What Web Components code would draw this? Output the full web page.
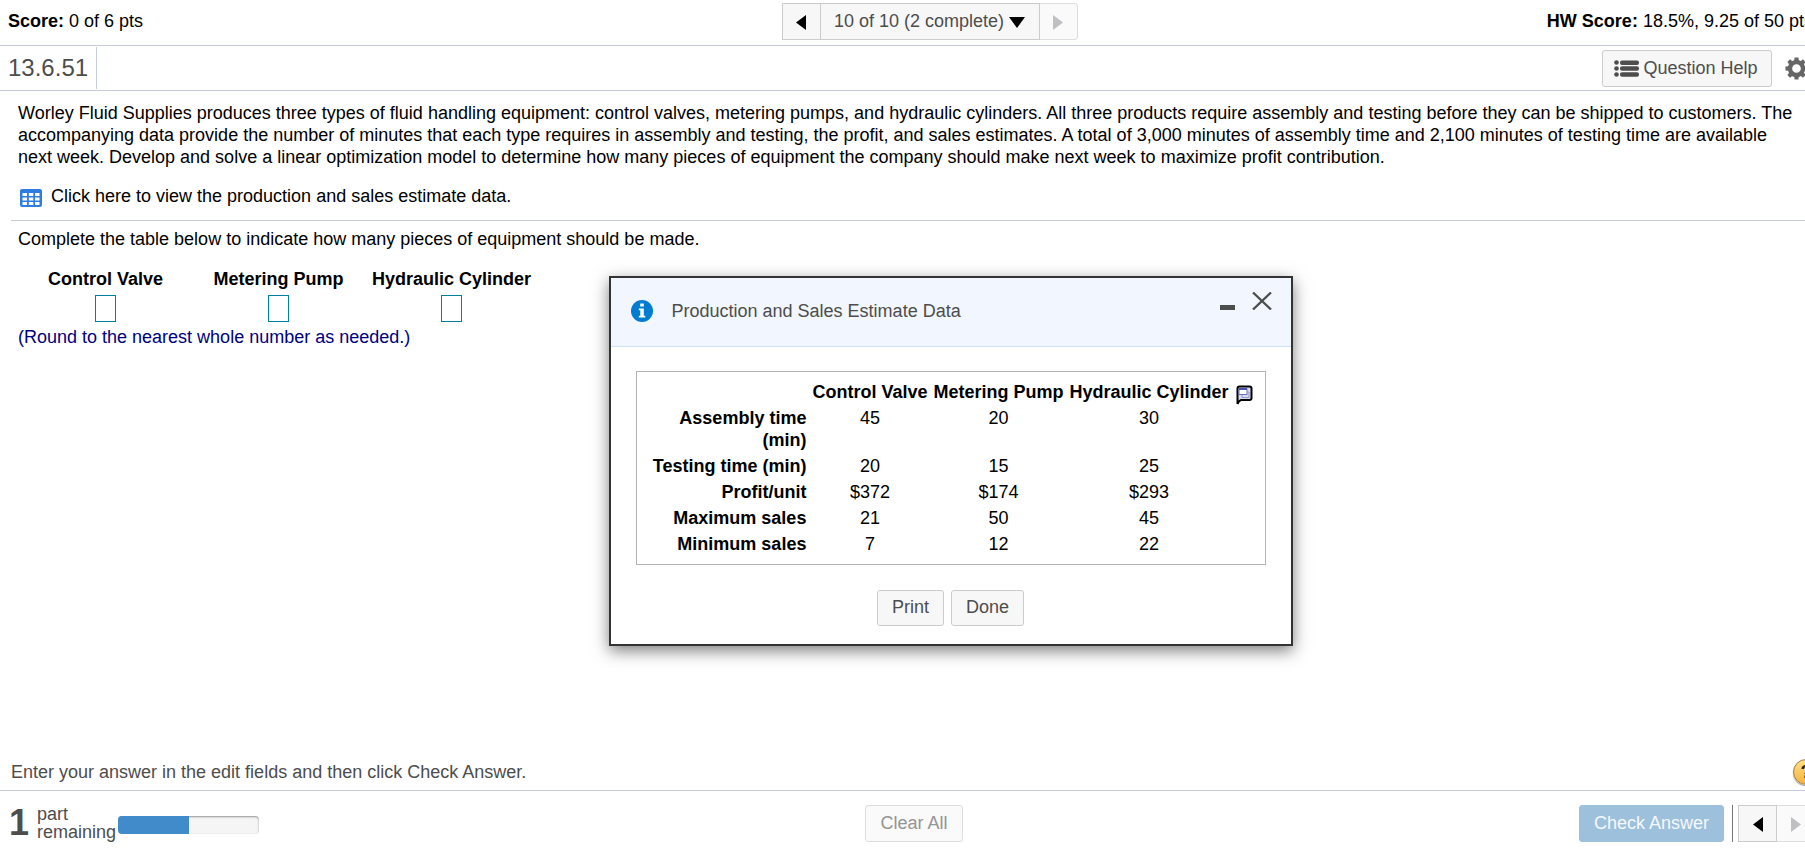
<!DOCTYPE html>
<html lang="en">
<head>
<meta charset="utf-8">
<title>Homework 13.6.51</title>
<style>
html, body { margin: 0; height: 100%; }
body { overflow-x: hidden; background: #fff; color: #000; font: 18px/22px "Liberation Sans", Arial, sans-serif; }
</style>
</head>
<body>
<homework-page></homework-page>
<script>
const define = (name, html) => customElements.define(name, class extends HTMLElement {
  constructor() {
    super();
    this.attachShadow({ mode: "open" }).innerHTML = html;
  }
});

const reset = `*, *::before { box-sizing: border-box; } button { margin: 0; font: inherit; cursor: pointer; }`;
const buttonLook = `button { display: flex; align-items: center; justify-content: center; border: 1px solid #ccc; border-radius: 3px; background: #f7f7f7; color: #4d4d4d; }`;
const left = `<svg width="10" height="15" viewBox="0 0 10 15" aria-hidden="true"><path fill="currentColor" d="M10 0v15L0 7.5z"/></svg>`;
const right = `<svg width="10" height="15" viewBox="0 0 10 15" aria-hidden="true"><path fill="currentColor" d="M0 0v15l10-7.500z"/></svg>`;
const pagerLook = `
  :host { display: flex; }
  button { height: 37px; width: 39px; border-radius: 0; color: #000; padding: 2px 0 0; }
  button + button { border-left: 0; }
  button:first-child { border-radius: 4px 0 0 4px; }
  button:last-child { border-radius: 0 4px 4px 0; }
  button:disabled { background: #fafafa; border-color: #ddd; color: #bfbfc4; }`;

define("question-pager", `<style>${reset}${buttonLook}${pagerLook}
  .list { width: 219px; gap: 5px; color: #4d4d4d; padding: 0 0 2px; }
  .list svg { color: #000; margin-top: 3px; }
  button:last-child { width: 38px; }
</style>
<button aria-label="Previous question">${left}</button>
<button class="list">10 of 10 (2 complete)<svg width="16" height="11" viewBox="0 0 16 11" aria-hidden="true"><path fill="currentColor" d="M0 0h16L8 11z"/></svg></button>
<button aria-label="Next question" disabled>${right}</button>`);

define("part-pager", `<style>${reset}${buttonLook}${pagerLook}</style>
<button aria-label="Previous part">${left}</button>
<button aria-label="Next part" disabled>${right}</button>`);

define("score-bar", `<style>${reset}
  :host { display: grid; grid-template-columns: 1fr auto 1fr; align-items: center; height: 46px; padding: 0 0 4px 8px; box-sizing: border-box; border-bottom: 1px solid #c8cbdc; }
  .hw { justify-self: end; margin-right: -8px; white-space: nowrap; }
  question-pager { margin: 2px 43px 0 89px; }
</style>
<div><b>Score:</b> 0 of 6 pts</div>
<question-pager></question-pager>
<div class="hw"><b>HW Score:</b> 18.5%, 9.25 of 50 pts</div>`);

define("exercise-bar", `<style>${reset}${buttonLook}
  :host { display: flex; align-items: center; height: 45px; box-sizing: border-box; border-bottom: 1px solid #c8cbdc; }
  h1 { margin: 0 auto 0 0; padding: 0 8px; height: 42px; border-right: 1px solid #c8cbdc; font-size: 24px; line-height: 42px; font-weight: 400; color: #4d4d4d; }
  .help { width: 170px; height: 37px; gap: 4px; padding: 0 2px 0 0; }
  .gear { border: 0; padding: 0; background: none; margin: 0 -3px 0 13px; }
</style>
<h1>13.6.51</h1>
<button class="help"><svg width="25" height="17" viewBox="0 0 25 17" fill="#4d4d4d" aria-hidden="true"><circle cx="2.500" cy="2.500" r="2.300"/><circle cx="2.500" cy="8.500" r="2.300"/><circle cx="2.500" cy="14.500" r="2.300"/><rect x="6" y=".5" width="19" height="4.500" rx="2"/><rect x="6" y="6.300" width="19" height="4.500" rx="2"/><rect x="6" y="12.200" width="19" height="4.500" rx="2"/></svg>Question Help</button>
<button class="gear" aria-label="Settings"><svg width="23" height="23" viewBox="-12 -12 24 24" aria-hidden="true"><g fill="#666"><path d="M-2.600-6L-2-11.500H2L2.600-6z"/><path transform="rotate(45)" d="M-2.600-6L-2-11.500H2L2.600-6z"/><path transform="rotate(90)" d="M-2.600-6L-2-11.500H2L2.600-6z"/><path transform="rotate(135)" d="M-2.600-6L-2-11.500H2L2.600-6z"/><path transform="rotate(180)" d="M-2.600-6L-2-11.500H2L2.600-6z"/><path transform="rotate(225)" d="M-2.600-6L-2-11.500H2L2.600-6z"/><path transform="rotate(270)" d="M-2.600-6L-2-11.500H2L2.600-6z"/><path transform="rotate(315)" d="M-2.600-6L-2-11.500H2L2.600-6z"/></g><circle r="6.800" fill="none" stroke="#666" stroke-width="4.500"/></svg></button>`);

define("problem-text", `<style>${reset}
  :host { display: block; margin-left: 11px; padding: 11px 12px 13px 7px; border-bottom: 1px solid #c8cbdc; }
  p { margin: 0; }
  a { display: flex; align-items: center; gap: 9px; margin: 17px 0 0 2px; color: inherit; text-decoration: none; }
  svg { margin-top: 4px; }
</style>
<p><slot></slot></p>
<a href="#data"><svg width="22" height="18" viewBox="0 0 22 18" aria-hidden="true"><rect width="22" height="18" rx="2" fill="#2f7de1"/><path fill="#fff" d="M2.500 4h4.500v3h-4.500zM8.800 4h4.500v3h-4.500zM15 4h4.500v3h-4.500zM2.500 8.500h4.500v3h-4.500zM8.800 8.500h4.500v3h-4.500zM15 8.500h4.500v3h-4.500zM2.500 13h4.500v3h-4.500zM8.800 13h4.500v3h-4.500zM15 13h4.500v3h-4.500z"/></svg>Click here to view the production and sales estimate data.</a>`);

define("answer-form", `<style>${reset}
  :host { display: block; padding: 7px 18px; }
  p { margin: 0; }
  .fields { display: grid; grid-template-columns: repeat(3, 173px); margin: 18px 0 4px 1px; }
  label { display: flex; flex-direction: column; align-items: center; gap: 5px; font-weight: 700; }
  input { width: 21px; height: 27px; padding: 0; border: 1px solid #007f9f; font: inherit; background: #fff; }
  .note { color: #000080; }
</style>
<p>Complete the table below to indicate how many pieces of equipment should be made.</p>
<div class="fields">
  <label>Control Valve<input type="text"></label>
  <label>Metering Pump<input type="text"></label>
  <label>Hydraulic Cylinder<input type="text"></label>
</div>
<p class="note">(Round to the nearest whole number as needed.)</p>`);

define("data-dialog", `<style>${reset}${buttonLook}
  :host { display: block; box-sizing: border-box; width: 684px; border: 2px solid #333; background: #fff; box-shadow: 0 5px 15px rgba(0,0,0,.5); }
  header { display: flex; align-items: flex-start; height: 69px; padding: 22px 19px 0 20px; background: #f2f6fe; border-bottom: 1px solid #cfe2f3; }
  h2 { margin: 0 auto 0 19px; font-size: 18px; line-height: 22px; font-weight: 400; color: #4d4d4d; }
  header button { border: 0; padding: 0; background: none; margin: -8px 0 0 16px; }
  .frame { display: flex; align-items: flex-start; margin: 24px 25px 0; padding: 6px 12px 6px 10px; border: 1px solid #b3b3b3; }
  table { border-spacing: 2px; }
  th, td { padding: 1px 2px; text-align: center; vertical-align: top; white-space: nowrap; }
  tbody th { width: 160px; white-space: normal; text-align: right; }
  .frame button { border: 0; padding: 0; background: none; margin: 7px 0 0 3px; }
  footer { display: flex; justify-content: center; gap: 7px; padding: 25px 0 18px; }
  footer button { height: 36px; padding: 0 14px 2px; }
</style>
<header>
  <svg width="22" height="22" viewBox="0 0 22 22" aria-hidden="true"><circle cx="11" cy="11" r="11" fill="#007dd1"/><path fill="#fff" d="M9.200 3.500h3.600v3H9.200zM7.800 8.500h5v7.200h1.500v1.800H7.800v-1.800h1.500v-5.400H7.800z"/></svg>
  <h2>Production and Sales Estimate Data</h2>
  <button aria-label="Minimize"><svg width="16" height="18" viewBox="0 0 16 18"><rect y="13" width="15" height="5" fill="#4d4d4d"/></svg></button>
  <button aria-label="Close"><svg width="20" height="18" viewBox="0 0 20 18"><path d="M1 .5L19 17.500M19 .5L1 17.500" stroke="#4d4d4d" stroke-width="2.300"/></svg></button>
</header>
<div class="frame">
  <table>
    <thead><tr><td></td><th scope="col">Control Valve</th><th scope="col">Metering Pump</th><th scope="col">Hydraulic Cylinder</th></tr></thead>
    <tbody>
      <tr><th scope="row">Assembly time (min)</th><td>45</td><td>20</td><td>30</td></tr>
      <tr><th scope="row">Testing time (min)</th><td>20</td><td>15</td><td>25</td></tr>
      <tr><th scope="row">Profit/unit</th><td>$372</td><td>$174</td><td>$293</td></tr>
      <tr><th scope="row">Maximum sales</th><td>21</td><td>50</td><td>45</td></tr>
      <tr><th scope="row">Minimum sales</th><td>7</td><td>12</td><td>22</td></tr>
    </tbody>
  </table>
  <button aria-label="Open data in another program"><svg width="17" height="20" viewBox="0 0 17 20" fill="none"><path d="M1.500 19V3.500Q1.500 1.500 3.500 1.500H13.500Q15.500 1.500 15.500 3.500V13Q15.500 15 13.500 15H5Q3 15.500 1.500 19" fill="#d9dcef" stroke="#000" stroke-width="2"/><rect x="3" y="4" width="8" height="5.500" fill="#fff" stroke="#6a70b8"/><path d="M3 4h8" stroke="#4a50b0" stroke-width="2"/><path d="M6 10v2.500h7V7h-2" stroke="#9498cc"/></svg></button>
</div>
<footer><button>Print</button><button>Done</button></footer>`);

define("hint-bar", `<style>${reset}
  :host { display: flex; align-items: center; justify-content: space-between; height: 37px; padding-left: 11px; color: #4d4d4d; border-bottom: 1px solid #c8cbdc; }
  button { width: 26px; height: 26px; margin-right: -14px; padding: 0; border: 1px solid #a07c3a; border-radius: 50%; background: linear-gradient(#fbe08a, #f3b33c); color: #222; font-size: 18px; font-weight: 700; line-height: 24px; box-shadow: 0 1px 1px #999; }
</style>
<span><slot></slot></span><button aria-label="Help">?</button>`);

define("action-bar", `<style>${reset}${buttonLook}
  :host { display: grid; grid-template-columns: 1fr auto 1fr; align-items: center; height: 65px; padding: 0 0 0 9px; box-sizing: border-box; color: #4d4d4d; }
  .parts { display: flex; align-items: center; padding-bottom: 2px; }
  .count { width: 28px; font-size: 36px; line-height: 36px; font-weight: 700; }
  .label { width: 81px; line-height: 18px; }
  .track { width: 141px; height: 18px; margin-top: 4px; border-radius: 4px; overflow: hidden; background: #f5f5f5; box-shadow: inset 0 1px 2px rgba(0,0,0,.4); }
  .fill { width: 50%; height: 100%; background: #428bca; }
  .clear { height: 37px; padding: 0 14px 2px; margin-left: 14px; background: #fafafa; border-color: #ddd; color: #949494; }
  .right { display: flex; justify-content: flex-end; margin-right: -11px; }
  .check { height: 37px; padding: 0 14px 2px; border-color: #9dc0dc; background: #9dc0dc; color: #f5f8fb; }
  .rule { width: 1px; margin: 0 5px 0 8px; background: #777; }
</style>
<div class="parts">
  <span class="count">1</span><span class="label">part remaining</span>
  <div class="track" role="progressbar" aria-label="Progress" aria-valuenow="50"><div class="fill"></div></div>
</div>
<button class="clear" disabled>Clear All</button>
<div class="right"><button class="check" disabled>Check Answer</button><span class="rule"></span><part-pager></part-pager></div>`);

define("homework-page", `<style>${reset}
  :host { display: flex; flex-direction: column; min-height: 100vh; position: relative; overflow: hidden; }
  main { flex: 1; }
  data-dialog { position: absolute; left: calc(50% + 48px); top: 276px; transform: translateX(-50%); }
</style>
<score-bar></score-bar>
<exercise-bar></exercise-bar>
<main>
  <problem-text>Worley Fluid Supplies produces three types of fluid handling equipment: control valves, metering pumps, and hydraulic cylinders. All three products require assembly and testing before they can be shipped to customers. The accompanying data provide the number of minutes that each type requires in assembly and testing, the profit, and sales estimates. A total of 3,000 minutes of assembly time and 2,100 minutes of testing time are available next week. Develop and solve a linear optimization model to determine how many pieces of equipment the company should make next week to maximize profit contribution.</problem-text>
  <answer-form></answer-form>
</main>
<hint-bar>Enter your answer in the edit fields and then click Check Answer.</hint-bar>
<action-bar></action-bar>
<data-dialog id="data" role="dialog" aria-label="Production and Sales Estimate Data"></data-dialog>`);
</script>
</body>
</html>
